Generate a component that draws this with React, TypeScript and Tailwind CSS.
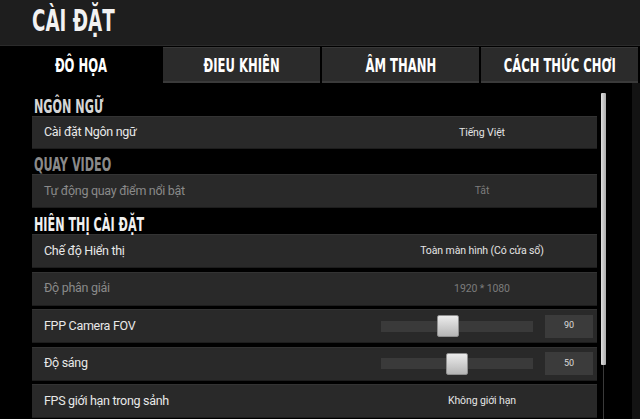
import React from 'react';

// condensed heading text: the game font is very narrow, so squeeze a bold face
const cond = "inline-block font-['DejaVu_Sans',sans-serif] font-bold leading-none whitespace-nowrap scale-x-[0.6]";

const tabs = ['ĐÔ HỌA', 'ĐIEU KHIÊN', 'ÂM THANH', 'CÁCH THỨC CHƠI'];

interface RowProps {
  label: string;
  value?: string;
  disabled?: boolean;
  slider?: { offset: number; num: string };
  h?: string;
}

const SectionTitle: React.FC<{ text: string; color: string; h: string }> = ({ text, color, h }) => (
  <div className={`${h} flex items-end pl-[2px]`}>
    <span className={`${cond} origin-left text-[20px] ${color} scale-x-[0.56]`}>{text}</span>
  </div>
);

const Row: React.FC<RowProps> = ({ label, value, disabled, slider, h = 'h-[34px]' }) => (
  <div
    className={`${h} flex items-center bg-[#292929] shadow-[inset_0_1px_0_#333333,inset_0_-1px_0_#1d1d1d] font-['Roboto',sans-serif]`}
  >
    <div
      className={`flex-1 pl-[12px] text-[12.5px] tracking-[-0.3px] ${disabled ? 'text-[#8a8a8a]' : 'text-[#e8e8e8]'}`}
    >
      {label}
    </div>
    {slider ? (
      <div className="w-[216px] flex items-center pr-[4px]">
        <div className="relative w-[152px] h-[11px] bg-[#3a3a3a]">
          <div
            className="absolute top-1/2 -translate-y-1/2 w-[22px] h-[22px] rounded-[2px] border border-[#8f8f8f] bg-gradient-to-b from-[#ececec] to-[#b5b5b5]"
            style={{ left: slider.offset }}
          />
        </div>
        <div className="ml-[12px] w-[48px] h-[23px] flex items-center justify-center bg-[#3b3b3b] text-[9px] text-[#dcdcdc]">
          {slider.num}
        </div>
      </div>
    ) : (
      <div
        className={`w-[230px] text-center text-[10.5px] tracking-[-0.1px] ${disabled ? 'text-[#7c7c7c]' : 'text-[#e4e4e4]'}`}
      >
        {value}
      </div>
    )}
  </div>
);

const App: React.FC = () => {
  return (
    <div className="w-[640px] h-[419px] bg-black overflow-hidden flex flex-col">
      {/* Header */}
      <div className="h-[46px] shrink-0 bg-[#1e1e1e] border-b border-[#2b2b2b] pl-[32px] flex items-center pb-[4px]">
        <span className={`${cond} origin-left text-[31px] text-[#f2f2f2] scale-x-[0.59]`}>CÀI ĐẶT</span>
      </div>

      {/* Tabs */}
      <div className="h-[37px] shrink-0 flex gap-[2px] pt-[1px]">
        {tabs.map((t, i) => (
          <div
            key={t}
            className={`flex items-center justify-center ${
              i === 0
                ? 'w-[161px] bg-black'
                : 'w-[157px] bg-[#2b2b2b] shadow-[inset_0_1px_0_#383838,inset_0_-2px_0_#3a3a3a]'
            }`}
          >
            <span className={`${cond} origin-center text-[20px] text-white scale-x-[0.58]`}>{t}</span>
          </div>
        ))}
      </div>

      {/* Body */}
      <div className="flex-1 flex">
        <div className="w-[597px] pl-[32px] flex flex-col">
          <SectionTitle text="NGÔN NGỮ" color="text-[#d6d6d6]" h="h-[33px]" />
          <Row label="Cài đặt Ngôn ngữ" value="Tiếng Việt" h="h-[33px]" />

          <SectionTitle text="QUAY VIDEO" color="text-[#8a8a8a]" h="h-[25px]" />
          <Row label="Tự động quay điểm nổi bật" value="Tắt" disabled />

          <SectionTitle text="HIÊN THỊ CÀI ĐẶT" color="text-[#f0f0f0]" h="h-[26px]" />
          <div className="flex flex-col gap-[3.5px]">
            <Row label="Chế độ Hiển thị" value="Toàn màn hình (Có cửa sổ)" />
            <Row label="Độ phân giải" value="1920 * 1080" disabled />
            <Row label="FPP Camera FOV" slider={{ offset: 56, num: '90' }} />
            <Row label="Độ sáng" slider={{ offset: 65, num: '50' }} />
            <Row label="FPS giới hạn trong sảnh" value="Không giới hạn" />
          </div>
        </div>

        {/* Scrollbar */}
        <div className="ml-[4px] w-[5px] flex flex-col items-center">
          <div className="mt-[10px] w-[5px] h-[272px] rounded-[1px] bg-gradient-to-r from-[#e0e0e0] to-[#a9a9a9]" />
          <div className="flex-1 w-px bg-[#3a3a3a]" />
        </div>

        <div className="flex-1" />
        <div className="w-[8px] bg-[#131313]" />
      </div>
    </div>
  );
};

export default App;
